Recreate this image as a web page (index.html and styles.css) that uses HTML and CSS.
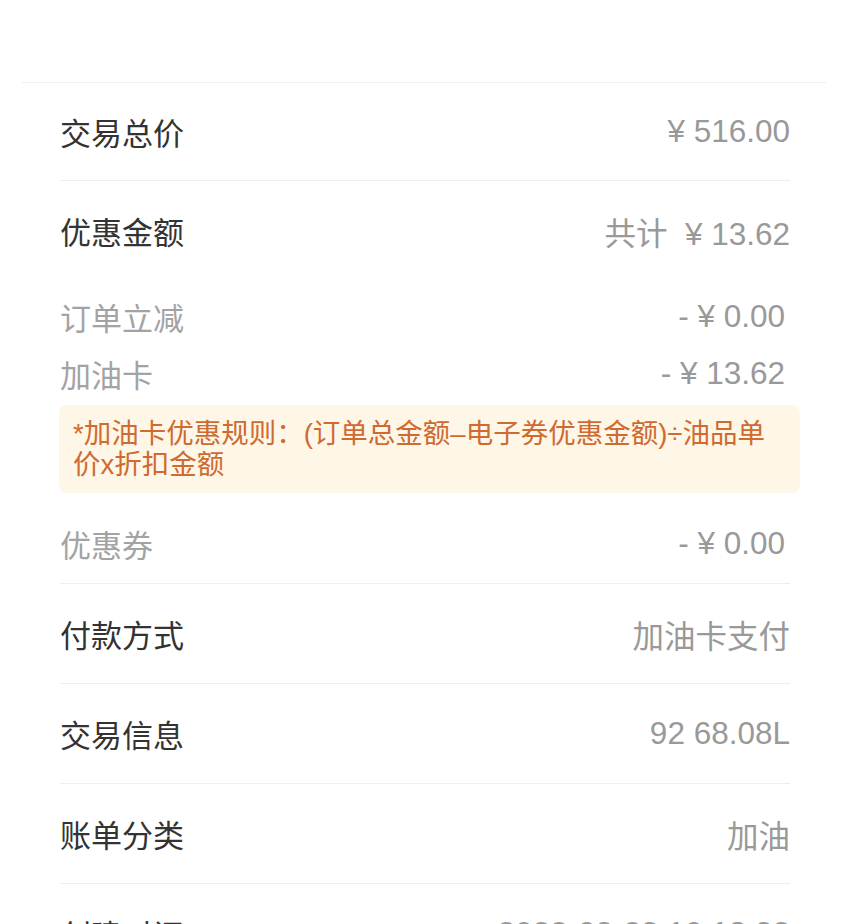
FILE: index.html
```html
<html lang="zh-CN">
<head>
    <meta charset="UTF-8">
    <title>账单详情</title>
    <link rel="stylesheet" href="styles.css">
</head>
<body>
<div class="page">
    <div class="card">
        <div class="row first">
            <span class="label">交易总价</span>
            <span class="value">¥ 516.00</span>
        </div>
        <div class="discount">
            <div class="row head">
                <span class="label">优惠金额</span>
                <span class="value">共计&nbsp;&nbsp;¥ 13.62</span>
            </div>
            <div class="sub">
                <span class="label">订单立减</span>
                <span class="value">- ¥ 0.00</span>
            </div>
            <div class="sub">
                <span class="label">加油卡</span>
                <span class="value">- ¥ 13.62</span>
            </div>
            <div class="tip">*加油卡优惠规则：(订单总金额–电子券优惠金额)÷油品单价x折扣金额</div>
            <div class="sub coupon">
                <span class="label">优惠券</span>
                <span class="value">- ¥ 0.00</span>
            </div>
        </div>
        <div class="row">
            <span class="label">付款方式</span>
            <span class="value">加油卡支付</span>
        </div>
        <div class="row">
            <span class="label">交易信息</span>
            <span class="value">92 68.08L</span>
        </div>
        <div class="row">
            <span class="label">账单分类</span>
            <span class="value">加油</span>
        </div>
        <div class="row">
            <span class="label">创建时间</span>
            <span class="value">2022-03-23 10:18:32</span>
        </div>
    </div>
</div>
</body>
</html>
```

FILE: styles.css
```css
body {
    margin: 0;
    padding: 0;
    background: #ffffff;
    font-family: "Liberation Sans", "Noto Sans CJK SC", sans-serif;
}

.page {
    padding: 82px 24px 0 22px;
}

.card {
    border-top: 1px solid #efefef;
    padding: 0 36px 0 38px;
}

.row {
    display: flex;
    justify-content: space-between;
    align-items: center;
    height: 99px;
    border-bottom: 1px solid #eeeeee;
}

.row.first {
    height: 97px;
}

.label {
    font-size: 31px;
    color: #333333;
}

.value {
    font-size: 31.5px;
    color: #999999;
}

.discount {
    border-bottom: 1px solid #eeeeee;
    padding-bottom: 11px;
}

.discount .head {
    height: 99px;
    border-bottom: none;
    margin-bottom: 8px;
}

.sub {
    display: flex;
    justify-content: space-between;
    align-items: center;
    height: 57px;
    padding-right: 5px;
}

.sub .label {
    color: #a3a3a3;
}

.tip {
    margin: 3px -10px 0 -1px;
    padding: 13px 16px 13px 14px;
    background: #fef6e6;
    border-radius: 8px;
    color: #cf6a30;
    font-size: 27.5px;
    line-height: 31px;
}

.coupon {
    margin-top: 22px;
}
```
